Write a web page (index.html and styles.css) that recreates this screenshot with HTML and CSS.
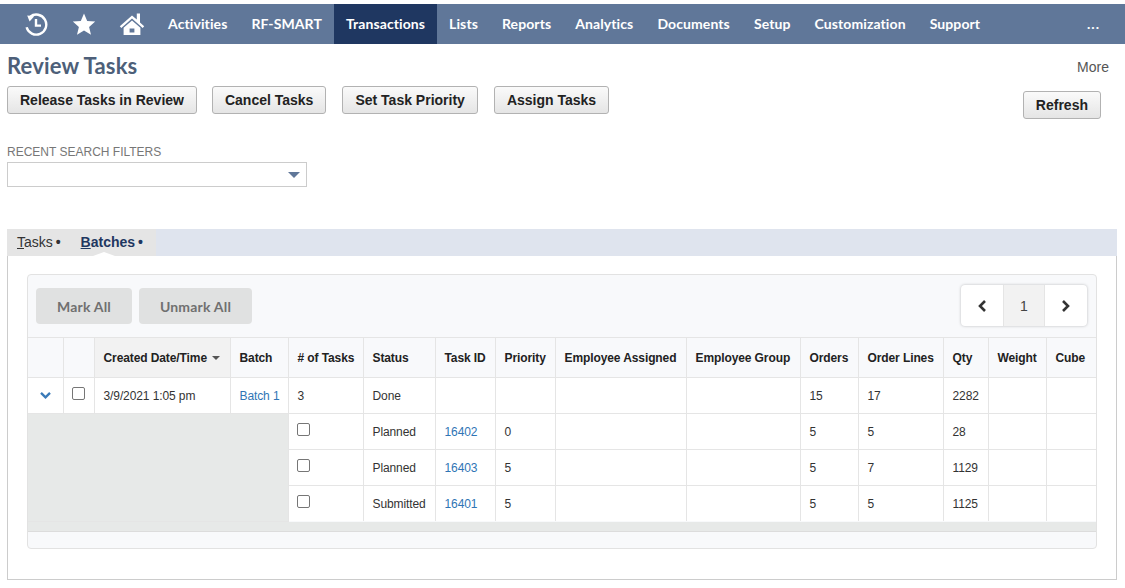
FILE: index.html
```html
<!DOCTYPE html>
<html>
    <head>
        <meta charset="utf-8" />
        <title>Review Tasks</title>
        <link rel="stylesheet" href="styles.css">
    </head>

    <body>
        <nav class="nav">
            <div class="nav-icons">
                <svg class="icon-recent" viewBox="0 0 24 24" width="24" height="24">
                    <path d="M6.2 4.6A10 10 0 1 1 2.6 15.2" fill="none" stroke="#fff" stroke-width="2.4" />
                    <path d="M3.2 3.6l7 .6-4.6 5.4z" fill="#fff" />
                    <path d="M12 7v6.6h5" fill="none" stroke="#fff" stroke-width="2.4" />
                </svg>
                <svg class="icon-star" viewBox="0 0 24 24" width="24" height="24">
                    <path d="M12 1.5l3.2 7.4 8 .7-6.1 5.3 1.9 7.9-7-4.2-7 4.2 1.9-7.9L.8 9.6l8-.7z" fill="#fff" />
                </svg>
                <svg class="icon-home" viewBox="0 0 26 24" width="26" height="24">
                    <path d="M13 3.5L0.8 14.2l1.5 1.7L13 6.6l10.7 9.3 1.5-1.7-4.2-3.7V1.6h-3.2v5.8z" fill="#fff" />
                    <path d="M4.6 15.8L13 8.6l8.4 7.2V23H4.6zM10.6 16.6V20.6h4.8V16.6z" fill="#fff" fill-rule="evenodd" />
                </svg>
            </div>
            <a class="nav-item">Activities</a>
            <a class="nav-item">RF-SMART</a>
            <a class="nav-item active">Transactions</a>
            <a class="nav-item">Lists</a>
            <a class="nav-item">Reports</a>
            <a class="nav-item">Analytics</a>
            <a class="nav-item">Documents</a>
            <a class="nav-item">Setup</a>
            <a class="nav-item">Customization</a>
            <a class="nav-item">Support</a>
            <a class="nav-item nav-more">...</a>
        </nav>

        <div class="title-row">
            <h1>Review Tasks</h1>
            <span class="more">More</span>
        </div>

        <div class="actions">
            <button class="btn">Release Tasks in Review</button>
            <button class="btn">Cancel Tasks</button>
            <button class="btn">Set Task Priority</button>
            <button class="btn">Assign Tasks</button>
            <button class="btn btn-refresh">Refresh</button>
        </div>

        <div class="filter">
            <label>RECENT SEARCH FILTERS</label>
            <div class="select"><span class="select-arrow"></span></div>
        </div>

        <div class="tabs">
            <div class="tab-group">
                <span class="tab"><u>T</u>asks <i>•</i></span>
                <span class="tab current"><u>B</u>atches <i>•</i></span>
            </div>
        </div>

        <div class="panel">
            <div class="card">
                <div class="toolbar">
                    <button class="btn-flat">Mark All</button>
                    <button class="btn-flat">Unmark All</button>
                    <div class="pager">
                        <span class="pager-btn">
                            <svg viewBox="0 0 12 14" width="12" height="14"><path d="M9 2L4 7l5 5" fill="none" stroke="#333" stroke-width="2.6" /></svg>
                        </span>
                        <span class="pager-page">1</span>
                        <span class="pager-btn">
                            <svg viewBox="0 0 12 14" width="12" height="14"><path d="M3 2l5 5-5 5" fill="none" stroke="#333" stroke-width="2.6" /></svg>
                        </span>
                    </div>
                </div>

                <table>
                    <colgroup>
                        <col class="c35"><col class="c31"><col class="c136"><col class="c58"><col class="c75">
                        <col class="c72"><col class="c60"><col class="c60"><col class="c131"><col class="c114">
                        <col class="c58"><col class="c85"><col class="c45"><col class="c58"><col class="c50">
                    </colgroup>
                    <thead>
                        <tr>
                            <th></th>
                            <th></th>
                            <th class="sorted">Created Date/Time <span class="caret"></span></th>
                            <th>Batch</th>
                            <th># of Tasks</th>
                            <th>Status</th>
                            <th>Task ID</th>
                            <th>Priority</th>
                            <th>Employee Assigned</th>
                            <th>Employee Group</th>
                            <th>Orders</th>
                            <th>Order Lines</th>
                            <th>Qty</th>
                            <th>Weight</th>
                            <th>Cube</th>
                        </tr>
                    </thead>
                    <tbody>
                        <tr>
                            <td class="center">
                                <svg viewBox="0 0 14 10" width="13" height="9"><path d="M2 2l5 5 5-5" fill="none" stroke="#3a7ab8" stroke-width="2.6" /></svg>
                            </td>
                            <td class="check-top"><span class="check"></span></td>
                            <td>3/9/2021 1:05 pm</td>
                            <td><a>Batch 1</a></td>
                            <td>3</td>
                            <td>Done</td>
                            <td></td>
                            <td></td>
                            <td></td>
                            <td></td>
                            <td>15</td>
                            <td>17</td>
                            <td>2282</td>
                            <td></td>
                            <td></td>
                        </tr>
                        <tr>
                            <td class="indent" colspan="4" rowspan="3"></td>
                            <td class="check-top"><span class="check"></span></td>
                            <td>Planned</td>
                            <td><a>16402</a></td>
                            <td>0</td>
                            <td></td>
                            <td></td>
                            <td>5</td>
                            <td>5</td>
                            <td>28</td>
                            <td></td>
                            <td></td>
                        </tr>
                        <tr>
                            <td class="check-top"><span class="check"></span></td>
                            <td>Planned</td>
                            <td><a>16403</a></td>
                            <td>5</td>
                            <td></td>
                            <td></td>
                            <td>5</td>
                            <td>7</td>
                            <td>1129</td>
                            <td></td>
                            <td></td>
                        </tr>
                        <tr>
                            <td class="check-top"><span class="check"></span></td>
                            <td>Submitted</td>
                            <td><a>16401</a></td>
                            <td>5</td>
                            <td></td>
                            <td></td>
                            <td>5</td>
                            <td>5</td>
                            <td>1125</td>
                            <td></td>
                            <td></td>
                        </tr>
                    </tbody>
                </table>
                <div class="strip"></div>
                <div class="card-foot"></div>
            </div>
        </div>
    </body>
</html>
```

FILE: styles.css
```css
html,
body {
    margin: 0;
    padding: 0;
    background: #fff;
    font-family: 'Liberation Sans', Arial, sans-serif;
    color: #222;
    height: 588px;
    overflow: hidden;
}

body {
    padding-top: 4px;
    box-sizing: border-box;
}

.nav {
    display: flex;
    align-items: stretch;
    height: 40px;
    background: #607799;
    font-family: 'Lato', sans-serif;
    font-size: 14px;
    font-weight: 700;
    letter-spacing: 0.1px;
    color: #fff;
}

.nav-icons {
    display: flex;
    align-items: center;
    gap: 24px;
    padding: 0 10px 0 24px;
}

.icon-home {
    margin: 0 1px 0 -1px;
}

.nav-item {
    display: flex;
    align-items: center;
    padding: 0 12px 1px;
}

.nav-item.active {
    background: #1f3761;
}

.nav-more {
    margin-left: auto;
    padding-right: 25px;
    letter-spacing: 1px;
}

.title-row {
    display: flex;
    justify-content: space-between;
    align-items: flex-start;
    padding: 0 16px 0 7px;
    height: 42px;
}

h1 {
    margin: 7px 0 0;
    font-family: 'Lato', sans-serif;
    font-size: 22px;
    font-weight: 700;
    letter-spacing: 0.15px;
    line-height: 30px;
    color: #4d5f79;
}

.more {
    margin-top: 15px;
    font-size: 14px;
    line-height: 16px;
    color: #555;
}

.actions {
    display: flex;
    align-items: flex-start;
    gap: 16px;
    padding: 0 24px 0 7px;
    height: 58px;
}

.btn {
    height: 28px;
    padding: 0 12px;
    border: 1px solid #b2b2b2;
    border-radius: 3px;
    background: linear-gradient(#fafafa, #e5e5e5);
    font-family: 'Liberation Sans', Arial, sans-serif;
    font-size: 14px;
    font-weight: 700;
    color: #222;
}

.btn:first-child {
    margin-right: -1px;
}

.btn-refresh {
    margin: 5px 0 0 auto;
}

.filter {
    padding-left: 7px;
    height: 85px;
}

.filter label {
    display: block;
    font-size: 12px;
    line-height: 14px;
    padding-top: 1px;
    margin-bottom: 3px;
    color: #777;
}

.select {
    display: flex;
    align-items: center;
    justify-content: flex-end;
    box-sizing: border-box;
    width: 300px;
    height: 25px;
    padding-right: 6px;
    border: 1px solid #ccc;
    background: #fff;
}

.select-arrow {
    width: 0;
    height: 0;
    border-left: 6px solid transparent;
    border-right: 6px solid transparent;
    border-top: 6px solid #607799;
}

.tabs {
    margin: 0 8px 0 7px;
    height: 27px;
    background: #dfe4ee;
}

.tab-group {
    display: inline-flex;
    height: 27px;
    padding-right: 3px;
    background: #e5e5e5;
}

.tab {
    position: relative;
    padding-left: 10px;
    padding-right: 10px;
    font-size: 14px;
    line-height: 26px;
    color: #333;
}

.tab i {
    margin-left: -1px;
    font-style: normal;
    font-weight: 700;
}

.tab.current {
    font-weight: 700;
    color: #1f3761;
}

.tab.current::after {
    content: "";
    position: absolute;
    left: 22px;
    bottom: 0;
    border-left: 11px solid transparent;
    border-right: 11px solid transparent;
    border-bottom: 4px solid #fff;
}

.panel {
    box-sizing: border-box;
    margin: 0 8px 0 7px;
    height: 324px;
    padding: 18px 19px 0;
    border: 1px solid #ccc;
    border-top: 0;
}

.card {
    box-sizing: border-box;
    width: 1070px;
    height: 275px;
    border: 1px solid #e2e2e2;
    border-radius: 4px;
    background: #f8f9fb;
    overflow: hidden;
}

.toolbar {
    display: flex;
    align-items: flex-start;
    gap: 7px;
    height: 62px;
    padding: 13px 9px 0 8px;
    box-sizing: border-box;
}

.btn-flat {
    width: 96px;
    height: 36px;
    border: 0;
    border-radius: 4px;
    background: #e0e1e1;
    font-family: 'Lato', sans-serif;
    font-size: 14px;
    font-weight: 700;
    letter-spacing: 0.2px;
    color: #707070;
}

.btn-flat + .btn-flat {
    width: 113px;
}

.pager {
    display: flex;
    margin-left: auto;
    margin-top: -3px;
    height: 41px;
    border-radius: 4px;
    background: #fff;
    box-shadow: 0 0 3px rgba(0, 0, 0, 0.25);
    font-size: 14px;
}

.pager-btn,
.pager-page {
    display: flex;
    align-items: center;
    justify-content: center;
    width: 42px;
}

.pager-page {
    box-sizing: border-box;
    background: #f2f2f2;
    border-left: 1px solid #e5e5e5;
    border-right: 1px solid #e5e5e5;
    color: #444;
}

table {
    table-layout: fixed;
    border-collapse: collapse;
    width: 1068px;
    font-size: 12px;
    letter-spacing: -0.1px;
    color: #333;
    border-top: 1px solid #e5e5e5;
}

.c35 { width: 35px; }
.c31 { width: 31px; }
.c136 { width: 136px; }
.c58 { width: 58px; }
.c75 { width: 75px; }
.c72 { width: 72px; }
.c60 { width: 60px; }
.c131 { width: 131px; }
.c114 { width: 114px; }
.c85 { width: 85px; }
.c45 { width: 45px; }
.c50 { width: 50px; }

th,
td {
    padding: 0 0 0 9px;
    border: 1px solid #e5e5e5;
    text-align: left;
    white-space: nowrap;
}

th:first-child,
td:first-child {
    border-left: 0;
}

th:last-child,
td:last-child {
    border-right: 0;
}

th {
    height: 39px;
    font-weight: 700;
    color: #222;
    background: #f8f9fb;
}

th.sorted {
    background: #f2f2f2;
}

.caret {
    display: inline-block;
    margin-left: 2px;
    vertical-align: 2px;
    border-left: 4px solid transparent;
    border-right: 4px solid transparent;
    border-top: 4px solid #555;
}

td {
    height: 35px;
    background: #fff;
}

tbody tr:last-child td {
    border-bottom: 0;
}

td.center {
    padding: 0;
    text-align: center;
}

td.indent {
    background: #e7e9e8;
}

td a {
    color: #2f75b5;
}

td.check-top {
    height: 26px;
    vertical-align: top;
    padding: 9px 0 0 8px;
}

.check {
    display: block;
    box-sizing: border-box;
    width: 13px;
    height: 13px;
    border: 1px solid #767676;
    border-radius: 2px;
    background: #fff;
}

.strip {
    height: 9px;
    background: #e7e9e8;
    border-bottom: 1px solid #dcdcdc;
}

.card-foot {
    height: 16px;
}
```
